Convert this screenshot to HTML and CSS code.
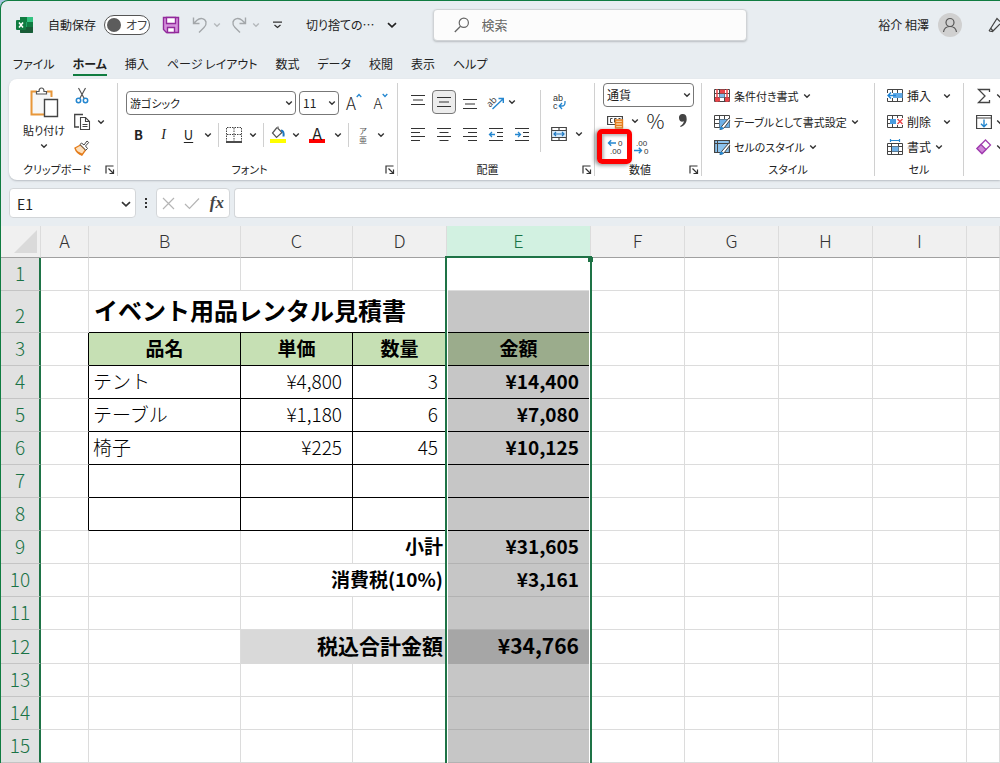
FILE: index.html
```
<!DOCTYPE html>
<html lang="ja">
<head>
<meta charset="utf-8">
<title>切り捨ての - Excel</title>
<link rel="stylesheet" href="styles.css">
</head>
<body>
<svg class="defs" aria-hidden="true">
  <symbol id="chev" viewBox="0 0 8 8"><path d="M1.2 2.6 4 5.3 6.8 2.6" fill="none" stroke="currentColor" stroke-width="1.4"/></symbol>
  <symbol id="launch" viewBox="0 0 10 10"><path d="M1 8.5V1h7.5M3.5 3.5l4.5 4.500M8.500 4.500v4h-4" fill="none" stroke="#333" stroke-width="1.2"/></symbol>
  <symbol id="table" viewBox="0 0 16 16"><path d="M.5 1.500h15v12H.5zM.5 5.500h15M.5 9.500h15M5.500 1.500v12M10.500 1.500v12" fill="#fff" stroke="#444"/></symbol>
</svg>
<div class="window">
  <header class="titlebar">
    <svg class="logo" width="18" height="18" viewBox="0 0 18 18"><rect x="4" y="1" width="13" height="16" rx="1" fill="#21a366"/><path d="M4 1h7v5H4z" fill="#107c41"/><path d="M11 1h5a1 1 0 0 1 1 1v4h-6z" fill="#33c481"/><path d="M4 11h13v5a1 1 0 0 1-1 1H5a1 1 0 0 1-1-1z" fill="#185c37"/><path d="M11 11h6v-5h-6z" fill="#107c41"/><rect x="0" y="4" width="10" height="10" rx="1" fill="#107c41"/><path d="m3 6.500 4 5M7 6.500l-4 5" stroke="#fff" stroke-width="1.500"/></svg>
    <label class="autosave"><span>自動保存</span><input type="checkbox"><span class="track"><span class="knob"></span>オフ</span></label>
    <button class="save" aria-label="保存"><svg width="18" height="18" viewBox="0 0 18 18"><path d="M1.500 1.500h15v15h-12l-3-3z" fill="#d591dc" stroke="#922a9c" stroke-width="1.400"/><path d="M4.500 1.500h9v6h-9zM5.500 11.500h7v5h-7z" fill="#fff" stroke="#922a9c" stroke-width="1.400"/></svg></button>
    <button class="undo" aria-label="元に戻す"><svg width="16" height="18" viewBox="0 0 16 18"><path d="M1.500 1.500v6h6M1.500 7.500 5 4.200C8 1.500 13 2 14 6c.5 2.500-.5 4-2 5.500l-5 5" fill="none" stroke="#a3a7aa" stroke-width="1.400"/></svg><svg class="chev pale"><use href="#chev"/></svg></button>
    <button class="undo" aria-label="やり直し"><svg width="16" height="18" viewBox="0 0 16 18"><path d="M14.500 1.500v6h-6M14.500 7.500 11 4.200C8 1.500 3 2 2 6c-.5 2.500.5 4 2 5.500l5 5" fill="none" stroke="#a3a7aa" stroke-width="1.400"/></svg><svg class="chev pale"><use href="#chev"/></svg></button>
    <button class="custom" aria-label="クイックアクセスのカスタマイズ"><svg width="9" height="8" viewBox="0 0 9 8"><path d="M0 1.200h9M1.500 4l3 2.500 3-2.500" fill="none" stroke="#333" stroke-width="1.300"/></svg></button>
    <button class="docname"><span>切り捨ての…</span><svg width="10" height="10" viewBox="0 0 8 8"><path d="M.8 2.500 4 5.500 7.200 2.500" fill="none" stroke="#222" stroke-width="1.300"/></svg></button>
    <label class="search"><svg width="16" height="16" viewBox="0 0 16 16"><circle cx="9.800" cy="5.800" r="4.600" fill="none" stroke="#666" stroke-width="1.200"/><path d="M6.500 9.200.8 15" stroke="#666" stroke-width="1.300"/></svg><input type="text" placeholder="検索" aria-label="検索"></label>
    <button class="user"><span>裕介 相澤</span><svg width="24" height="24" viewBox="0 0 24 24"><circle cx="12" cy="12" r="12" fill="#d0d0d0"/><circle cx="12" cy="9.500" r="4" fill="none" stroke="#555" stroke-width="1.200"/><path d="M5.500 19c.5-3.500 3-5.500 6.500-5.500s6 2 6.500 5.500" fill="none" stroke="#555" stroke-width="1.200"/></svg></button>
    <button class="pen" aria-label="ペン"><svg width="12" height="16" viewBox="0 0 12 16"><path d="M1 14 9 1.500l3 3M1 14l3.500.5L12 7M2.500 11l2.500 3" fill="none" stroke="#444" stroke-width="1.200"/></svg></button>
  </header>

  <nav class="tabs">
    <button>ファイル</button><button class="active">ホーム</button><button>挿入</button><button>ページ レイアウト</button><button>数式</button><button>データ</button><button>校閲</button><button>表示</button><button>ヘルプ</button>
  </nav>

  <section class="ribbon">
    <div class="group clipboard">
      <div class="body">
        <button class="paste"><svg width="30" height="31" viewBox="0 0 30 31"><path d="M8 4.500H2.500v23H15M18 4.500h4.500V10" fill="#f8f3ea" stroke="#e8973a" stroke-width="2"/><path d="M4 6h17v20H4z" fill="#f7f7f7"/><path d="M7.500 7V4.500H10C10 2 11 1 12.500 1S15 2 15 4.500h2.500V7z" fill="#fff" stroke="#555" stroke-width="1.200"/><path d="M15.500 12.500h13v17h-13z" fill="#fff" stroke="#444" stroke-width="1.400"/></svg><span>貼り付け</span><svg class="chev"><use href="#chev"/></svg></button>
        <div class="stack">
          <button aria-label="切り取り"><svg width="16" height="18" viewBox="0 0 16 18"><path d="m4.500 1 6 11M11.500 1l-6 11" stroke="#555" stroke-width="1.200"/><circle cx="4.500" cy="13.500" r="2.200" fill="none" stroke="#2587d0" stroke-width="1.500"/><circle cx="11.500" cy="13.500" r="2.200" fill="none" stroke="#2587d0" stroke-width="1.500"/></svg></button>
          <button aria-label="コピー"><svg width="16" height="18" viewBox="0 0 16 18"><path d="M5 14H.7V1.500H9" fill="none" stroke="#444" stroke-width="1.300"/><path d="M6.500 4.500h5l4 4v8h-9zM11.500 4.500v4h4M8.500 11.500h5M8.500 13.500h5" fill="#fff" stroke="#444" stroke-width="1.100"/></svg><svg class="chev"><use href="#chev"/></svg></button>
          <button aria-label="書式のコピー"><svg width="16" height="16" viewBox="0 0 16 16"><path d="m1 8 5.500-3 5 5L8 15C5 14 2 11.500 1 8z" fill="#fce0bd" stroke="#e57d1c" stroke-width="1.400"/><path d="M3 11l6 3-1 1.500C6 15 4 13.500 3 11z" fill="#e57d1c"/><path d="m6 4.500 1.500-1.500 2.500 2 3-4 1.700 1.500L11.500 6l2 2.500-1.700 1.700z" fill="#fff" stroke="#444"/></svg></button>
        </div>
      </div>
      <div class="caption"><span>クリップボード</span><button aria-label="クリップボードの詳細"><svg width="10" height="10"><use href="#launch"/></svg></button></div>
    </div>

    <div class="group font">
      <div class="body rows">
        <div class="row">
          <span class="select fontname"><select aria-label="フォント"><option>游ゴシック</option></select><svg class="chev"><use href="#chev"/></svg></span>
          <span class="select fontsize"><select aria-label="フォント サイズ"><option>11</option></select><svg class="chev"><use href="#chev"/></svg></span>
          <button class="grow" aria-label="フォント サイズの拡大">A<svg width="6" height="5" viewBox="0 0 6 5"><path d="m.7 4 2.300-2.500L5.300 4" fill="none" stroke="#2587d0" stroke-width="1.300"/></svg></button>
          <button class="grow small" aria-label="フォント サイズの縮小">A<svg width="6" height="5" viewBox="0 0 6 5"><path d="M.7 1 3 3.500 5.300 1" fill="none" stroke="#2587d0" stroke-width="1.300"/></svg></button>
        </div>
        <div class="row tight">
          <button class="w25 bold">B</button><button class="w25 ital">I</button><button class="w25 under">U</button><button class="w14" aria-label="下線の種類"><svg class="chev"><use href="#chev"/></svg></button>
          <i class="sep"></i>
          <button class="w24" aria-label="罫線"><svg width="16" height="16" viewBox="0 0 16 16"><path d="M.5 1v13M15.500 1v13M8 1v13M1 .5h14M1 7.500h14" stroke="#444" stroke-dasharray="1.500 1"/><path d="M0 15h16" stroke="#111" stroke-width="1.600"/></svg></button><button class="w14" aria-label="罫線の種類"><svg class="chev"><use href="#chev"/></svg></button>
          <i class="sep"></i>
          <button class="w22" aria-label="塗りつぶしの色"><svg width="16" height="17" viewBox="0 0 16 17"><path d="M7 1.500 2.500 7l4 4.500L12 6.500 8 2.500v-2" fill="#fff" stroke="#555" stroke-width="1.200"/><path d="M11 4.500c2 0 3 1.500 2.500 6" fill="none" stroke="#1f78c0" stroke-width="2"/><path d="M0 13h16v4H0z" fill="#ff0"/></svg></button><button class="w14" aria-label="塗りつぶしの色を選択"><svg class="chev"><use href="#chev"/></svg></button>
          <button class="fontcolor" aria-label="フォントの色">A</button><button class="w14" aria-label="フォントの色を選択"><svg class="chev"><use href="#chev"/></svg></button>
          <i class="sep"></i>
          <button class="w22 ruby" aria-label="ふりがな"><span>ア</span><span>亜</span></button><button class="w14" aria-label="ふりがなの設定"><svg class="chev"><use href="#chev"/></svg></button>
        </div>
      </div>
      <div class="caption"><span>フォント</span><button aria-label="フォントの詳細"><svg width="10" height="10"><use href="#launch"/></svg></button></div>
    </div>

    <div class="group align">
      <div class="body">
        <div class="alignleft">
          <button aria-label="上揃え"><svg width="16" height="16" viewBox="0 0 16 16"><path d="M1 1.500h14M3 6h10M1 10.500h14" stroke="#333" stroke-width="1.200"/></svg></button>
          <button class="pressed" aria-label="上下中央揃え"><svg width="16" height="16" viewBox="0 0 16 16"><path d="M1 3.500h14M3 8h10M1 12.500h14" stroke="#333" stroke-width="1.200"/></svg></button>
          <button aria-label="下揃え"><svg width="16" height="16" viewBox="0 0 16 16"><path d="M1 5.500h14M3 10h10M1 14.500h14" stroke="#333" stroke-width="1.200"/></svg></button>
          <button class="wide" aria-label="方向"><svg width="16" height="16" viewBox="0 0 16 16"><text x="-3" y="10" transform="rotate(-45 4 6)" class="ab">ab</text><path d="M4.500 15 15 5M10.500 4.500H15.300V9" fill="none" stroke="#2587d0" stroke-width="1.400"/></svg><svg class="chev"><use href="#chev"/></svg></button>
          <button aria-label="左揃え"><svg width="16" height="16" viewBox="0 0 16 16"><path d="M1 2.500h14M1 6.500h9M1 10.500h14M1 14.500h9" stroke="#333" stroke-width="1.200"/></svg></button>
          <button aria-label="中央揃え"><svg width="16" height="16" viewBox="0 0 16 16"><path d="M1 2.500h14M3.500 6.500h9M1 10.500h14M3.500 14.500h9" stroke="#333" stroke-width="1.200"/></svg></button>
          <button aria-label="右揃え"><svg width="16" height="16" viewBox="0 0 16 16"><path d="M1 2.500h14M6 6.500h9M1 10.500h14M6 14.500h9" stroke="#333" stroke-width="1.200"/></svg></button>
          <button aria-label="インデントを減らす"><svg width="16" height="16" viewBox="0 0 16 16"><path d="M1 2.500h14M9 6.500h6M9 10.500h6M1 14.500h14" stroke="#333" stroke-width="1.200"/><path d="M1.500 8.500H7M4 6 1.500 8.500 4 11" fill="none" stroke="#2587d0" stroke-width="1.300"/></svg></button>
          <button aria-label="インデントを増やす"><svg width="16" height="16" viewBox="0 0 16 16"><path d="M1 2.500h14M9 6.500h6M9 10.500h6M1 14.500h14" stroke="#333" stroke-width="1.200"/><path d="M1 8.500h5.500M4 6l2.500 2.500L4 11" fill="none" stroke="#2587d0" stroke-width="1.300"/></svg></button>
        </div>
        <i class="sep tall"></i>
        <div class="alignright">
          <button class="wrap" aria-label="折り返して全体を表示する"><svg width="16" height="18" viewBox="0 0 16 18"><text x="2" y="8" class="wraptext">ab</text><text x="2" y="16" class="wraptext">c</text><path d="M14 8v1.500c0 2-1 3.500-3 3.500H8.500M11 10l-2.800 3 2.800 3" fill="none" stroke="#2587d0" stroke-width="1.300"/></svg></button>
          <button class="merge" aria-label="セルを結合して中央揃え"><svg width="16" height="16" viewBox="0 0 16 16"><path d="M.7 1.500h14.600v13H.7zM.7 4.500h14.600M.7 11.500h14.600M8 1.500v3M8 11.500v3" fill="#fff" stroke="#444" stroke-width="1.200"/><path d="M1.300 5h13.400v6H1.300z" fill="#d9ebfa"/><path d="M3 8h10M5 6 3 8l2 2M11 6l2 2-2 2" fill="none" stroke="#1f78c0" stroke-width="1.200"/></svg></button><button class="w14" aria-label="結合の種類"><svg class="chev"><use href="#chev"/></svg></button>
        </div>
      </div>
      <div class="caption"><span>配置</span><button aria-label="配置の詳細"><svg width="10" height="10"><use href="#launch"/></svg></button></div>
    </div>

    <div class="group number">
      <div class="body lines">
        <span class="select numfmt"><select aria-label="数値の書式"><option>通貨</option></select><svg class="chev"><use href="#chev"/></svg></span>
        <div class="line">
          <button class="w25" aria-label="通貨表示形式"><svg width="17" height="15" viewBox="0 0 17 15"><path d="M.6 2.500h14.800v8H.6z" fill="#fff" stroke="#444" stroke-width="1.200"/><path d="M5.500 4.500h-2v4h2M9.500 4.500h-2v4M11.500 4.500h2" fill="none" stroke="#444"/><path d="M8.500 6h7v8h-7z" fill="#fbd19b" stroke="#e57d1c" stroke-width="1.400"/><path d="M8.500 8.700h7M8.500 11.400h7" stroke="#e57d1c" stroke-width="1.200"/></svg></button><button class="w14" aria-label="通貨の種類"><svg class="chev"><use href="#chev"/></svg></button><button class="percent">%</button><button class="comma" aria-label="桁区切りスタイル"><svg width="10" height="14" viewBox="0 0 10 14"><path d="M1 4a3.500 3.500 0 0 1 7.500-.5C9.500 8 6.500 12 2.500 13l-.3-1C4.500 11 5.800 9 5.800 7.300 3.500 8.500 1 7 1 4z" fill="#444"/></svg></button>
        </div>
        <div class="line">
          <button class="decimal target" aria-label="小数点以下の表示桁数を増やす"><svg width="18" height="16" viewBox="0 0 18 16"><text x="11" y="7" class="dec">0</text><text x="3" y="15" class="dec">.00</text><path d="M1.500 4H9M4.200 1.300 1.500 4l2.700 2.700" fill="none" stroke="#2587d0" stroke-width="1.400"/></svg></button>
          <button class="decimal" aria-label="小数点以下の表示桁数を減らす"><svg width="18" height="16" viewBox="0 0 18 16"><text x="3" y="7" class="dec">.00</text><text x="11" y="15" class="dec">0</text><path d="M1 11.500h7.500M5.800 8.800l2.700 2.700-2.700 2.700" fill="none" stroke="#2587d0" stroke-width="1.400"/></svg></button>
        </div>
      </div>
      <div class="caption"><span>数値</span><button aria-label="数値の詳細"><svg width="10" height="10"><use href="#launch"/></svg></button></div>
    </div>

    <div class="group styles">
      <div class="body lines">
        <button class="item"><svg width="16" height="16" viewBox="0 0 16 16"><use href="#table" width="16" height="16"/><path d="M6 1.500h5v4H6zM1 9.500h5v4H1zM11 9.500h4.500v4H11z" fill="#e8444a"/><path d="M5.500 6h5v3.500h-5z" fill="#7fb9ea"/><path d="M3 1v13M13 1v13" stroke="#e8444a" stroke-width="1.500"/></svg>条件付き書式<svg class="chev"><use href="#chev"/></svg></button>
        <button class="item"><svg width="16" height="16" viewBox="0 0 16 16"><use href="#table" width="16" height="16"/><path d="M5.500 5.500h10v8h-10z" fill="#6fb1e8"/><path d="m15 4-7 8-2 3.500 4-1.500 6-8" fill="#fff" stroke="#444"/><path d="M5.500 15.500c0-3 2-3.500 3.500-2s-.5 2.500-3.500 2z" fill="#2587d0"/></svg>テーブルとして書式設定<svg class="chev"><use href="#chev"/></svg></button>
        <button class="item"><svg width="16" height="16" viewBox="0 0 16 16"><path d="M.6 1.500h14.800v12H.6z" fill="#8cc3ee" stroke="#444" stroke-width="1.200"/><path d="M.6 4.500h14.800M3.500 1.500v12" stroke="#444"/><path d="m15 4-7 8-2 3.500 4-1.500 6-8" fill="#fff" stroke="#444"/><path d="M5.500 15.500c0-3 2-3.500 3.500-2s-.5 2.500-3.500 2z" fill="#2587d0"/></svg>セルのスタイル<svg class="chev"><use href="#chev"/></svg></button>
      </div>
      <div class="caption"><span>スタイル</span></div>
    </div>

    <div class="group cells">
      <div class="body lines">
        <button class="item spread"><svg width="16" height="16" viewBox="0 0 16 16"><use href="#table" width="16" height="16"/><path d="M6 5h9.500v5H6z" fill="#5fa9e6"/><path d="M0 5h6v5H0z" fill="#fff"/><path d="M1 7.500h8M4 4.500l-3 3 3 3" fill="none" stroke="#1f83d3" stroke-width="1.400"/></svg>挿入<svg class="chev"><use href="#chev"/></svg></button>
        <button class="item spread"><svg width="16" height="16" viewBox="0 0 16 16"><use href="#table" width="16" height="16"/><path d="M3 5h6v5H3z" fill="#4a9de0"/><path d="M9 4h7v7H9z" fill="#fff"/><path d="m10.500 5 5 5M15.500 5l-5 5" stroke="#e8444a" stroke-width="1.400"/></svg>削除<svg class="chev"><use href="#chev"/></svg></button>
        <button class="item"><svg width="16" height="16" viewBox="0 0 16 16"><path d="M.5 4.500h15v11H.5zM.5 7.500h15M.5 12.500h15M4.500 4.500v11M11.500 4.500v11" fill="#fff" stroke="#444"/><path d="M5 7.500h6.500v5H5z" fill="#6fb1e8"/><path d="M3.500 1.500h9M3.500 0v3M12.500 0v3" stroke="#2587d0" stroke-width="1.200"/></svg>書式<svg class="chev"><use href="#chev"/></svg></button>
      </div>
      <div class="caption"><span>セル</span></div>
    </div>

    <div class="group editing">
      <div class="body lines">
        <button class="item" aria-label="合計"><svg width="16" height="16" viewBox="0 0 16 16"><path d="M13.500 4V1.500h-11L9 8l-6.500 6.500h11V12" fill="none" stroke="#444" stroke-width="1.300"/></svg><svg class="chev"><use href="#chev"/></svg></button>
        <button class="item" aria-label="フィル"><svg width="16" height="16" viewBox="0 0 16 16"><path d="M.6 1.500h14.800v13H.6zM.6 4h14.800" fill="#fff" stroke="#444" stroke-width="1.200"/><path d="M8 5.500v7M5 9.700l3 3 3-3" fill="none" stroke="#2587d0" stroke-width="1.400"/></svg><svg class="chev"><use href="#chev"/></svg></button>
        <button class="item" aria-label="クリア"><svg width="16" height="16" viewBox="0 0 16 16"><path d="M1 9.500 9.500 1l5 5L6 14.500z" fill="#fff" stroke="#a23fb0" stroke-width="1.300"/><path d="M1 9.500 5 5.500l5 5-4 4z" fill="#cf85d8" stroke="#a23fb0" stroke-width="1.300"/></svg><svg class="chev"><use href="#chev"/></svg></button>
      </div>
    </div>
  </section>

  <div class="formulabar">
    <div class="namebox"><input type="text" value="E1" aria-label="名前ボックス"><button aria-label="名前の一覧"><svg width="10" height="10" viewBox="0 0 8 8"><path d="M.8 2.500 4 5.500 7.200 2.500" fill="none" stroke="#333" stroke-width="1.300"/></svg></button></div>
    <svg class="dots" width="4" height="12" viewBox="0 0 4 12"><path d="M1 1h2v2H1zM1 5h2v2H1zM1 9h2v2H1z" fill="#333"/></svg>
    <div class="fxbox">
      <button aria-label="キャンセル"><svg width="13" height="13" viewBox="0 0 13 13"><path d="m1 1 11 11M12 1 1 12" stroke="#b5b5b5" stroke-width="1.200"/></svg></button>
      <button aria-label="入力"><svg width="16" height="13" viewBox="0 0 16 13"><path d="m1 7 4.500 4.500L15 1.500" fill="none" stroke="#b5b5b5" stroke-width="1.200"/></svg></button>
      <button class="fx">fx</button>
    </div>
    <input class="formula" type="text" aria-label="数式">
  </div>

  <main class="sheet">
    <table>
      <colgroup><col class="c-row"><col class="c-a"><col class="c-b"><col class="c-c"><col class="c-d"><col class="c-e"><col class="c-n"><col class="c-n"><col class="c-n"><col class="c-n"><col></colgroup>
      <thead>
        <tr><th class="corner"><svg width="23" height="23" viewBox="0 0 23 23"><path d="M23 0v23H0z" fill="#dadada"/></svg></th><th>A</th><th>B</th><th>C</th><th>D</th><th class="sel">E<div class="selection"><i></i></div></th><th>F</th><th>G</th><th>H</th><th>I</th><th></th></tr>
      </thead>
      <tbody>
        <tr><th>1</th><td></td><td></td><td></td><td></td><td></td><td></td><td></td><td></td><td></td><td></td></tr>
        <tr class="r-title"><th>2</th><td></td><td colspan="3" class="title kb">イベント用品レンタル見積書</td><td class="e kb"></td><td></td><td></td><td></td><td></td><td></td></tr>
        <tr class="r-head"><th>3</th><td class="kr"></td><td class="k">品名</td><td class="k">単価</td><td class="k">数量</td><td class="e kb">金額</td><td></td><td></td><td></td><td></td><td></td></tr>
        <tr><th>4</th><td class="kr"></td><td class="k">テント</td><td class="k num">¥4,800</td><td class="k cnt">3</td><td class="e kb">¥14,400</td><td></td><td></td><td></td><td></td><td></td></tr>
        <tr><th>5</th><td class="kr"></td><td class="k">テーブル</td><td class="k num">¥1,180</td><td class="k cnt">6</td><td class="e kb">¥7,080</td><td></td><td></td><td></td><td></td><td></td></tr>
        <tr><th>6</th><td class="kr"></td><td class="k">椅子</td><td class="k num">¥225</td><td class="k cnt">45</td><td class="e kb">¥10,125</td><td></td><td></td><td></td><td></td><td></td></tr>
        <tr><th>7</th><td class="kr"></td><td class="k"></td><td class="k"></td><td class="k"></td><td class="e kb"></td><td></td><td></td><td></td><td></td><td></td></tr>
        <tr><th>8</th><td class="kr"></td><td class="k"></td><td class="k"></td><td class="k"></td><td class="e kb"></td><td></td><td></td><td></td><td></td><td></td></tr>
        <tr><th>9</th><td></td><td></td><td></td><td class="lab">小計</td><td class="e">¥31,605</td><td></td><td></td><td></td><td></td><td></td></tr>
        <tr><th>10</th><td></td><td></td><td colspan="2" class="lab">消費税(10%)</td><td class="e">¥3,161</td><td></td><td></td><td></td><td></td><td></td></tr>
        <tr><th>11</th><td></td><td></td><td></td><td></td><td class="e"></td><td></td><td></td><td></td><td></td><td></td></tr>
        <tr class="r-total"><th>12</th><td></td><td></td><td colspan="2" class="lab">税込合計金額</td><td class="e">¥34,766</td><td></td><td></td><td></td><td></td><td></td></tr>
        <tr><th>13</th><td></td><td></td><td></td><td></td><td class="e"></td><td></td><td></td><td></td><td></td><td></td></tr>
        <tr><th>14</th><td></td><td></td><td></td><td></td><td class="e"></td><td></td><td></td><td></td><td></td><td></td></tr>
        <tr><th>15</th><td></td><td></td><td></td><td></td><td class="e"></td><td></td><td></td><td></td><td></td><td></td></tr>
      </tbody>
    </table>
  </main>
</div>
</body>
</html>
```
FILE: styles.css
```
* { box-sizing: border-box; }
body { margin: 0; background: #a9c3e0; font: 12px/16px "Noto Sans CJK JP", sans-serif; color: #222; overflow: hidden; }
svg { flex: none; display: block; overflow: visible; }
button, input, select { font: inherit; color: inherit; border: 0; padding: 0; margin: 0; background: none; }
button { display: flex; align-items: center; justify-content: center; white-space: nowrap; font-feature-settings: "palt"; }
input { min-width: 0; outline: 0; }
.defs { position: absolute; width: 0; height: 0; }
.chev { width: 8px; height: 8px; color: #333; }
.pale { color: #b4b8bb; }
.window { height: 100vh; display: flex; flex-direction: column; overflow: hidden; border: solid #107c41; border-width: 1px 0 0 1px; border-top-left-radius: 8px; background: #e8edf1; }

.titlebar { flex: none; height: 47px; display: flex; align-items: center; padding-left: 15px; }
.autosave { display: flex; align-items: center; gap: 8px; margin-left: 14px; position: relative; }
.autosave input { position: absolute; opacity: 0; }
.track { display: flex; align-items: center; gap: 5px; width: 46px; height: 20px; border: 1px solid #555; border-radius: 10px; background: #fff; padding-left: 2px; color: #444; white-space: nowrap; font-feature-settings: "palt"; }
.knob { flex: none; width: 14px; height: 14px; border-radius: 50%; background: #5c5c5c; }
.save { margin-left: 12px; }
.undo { margin-left: 12px; gap: 5px; }
.undo + .undo { margin-left: 10px; }
.custom { margin-left: 13px; }
.docname { margin-left: 24px; gap: 12px; }
.search { width: 314px; height: 32px; display: flex; align-items: center; gap: 12px; padding-left: 20px; margin-left: 36px; background: #fcfcfc; border: 1px solid #d0d3d6; border-radius: 4px; box-shadow: 0 1px 2px #b9bdc1; font-size: 13px; }
.search input { flex: 1; }
.search input::placeholder { color: #666; opacity: 1; }
.user { margin-left: auto; gap: 9px; }
.pen { margin-left: 26px; }

.tabs { flex: none; height: 31px; display: flex; gap: 18px; padding-left: 12px; }
.tabs button { height: 28px; padding-top: 6px; border-bottom: 2px solid transparent; }
.tabs .active { font-weight: 700; border-color: #107c41; }

.ribbon { flex: none; display: flex; margin-left: 8px; background: #fff; border-radius: 8px 0 0 8px; padding: 4px 0; box-shadow: 0 1px 2px #b8bdc2; }
.group { flex: none; display: flex; flex-direction: column; height: 93px; position: relative; border-right: 1px solid #d0d0d0; }
.body { height: 77px; display: flex; }
.caption { height: 16px; display: flex; justify-content: center; padding: 1px 24px 0 0; font-size: 11px; font-feature-settings: "palt"; position: relative; }
.caption button { position: absolute; right: 2px; top: 5px; }
.clipboard { width: 109px; }
.clipboard .body { padding-left: 13px; }
.clipboard .caption { padding-right: 12px; }
.paste { width: 44px; flex-direction: column; justify-content: flex-start; gap: 4px; padding-top: 4px; font-size: 11px; }
.stack { display: flex; flex-direction: column; gap: 8px; padding: 4px 0 0 8px; }
.stack button { justify-content: flex-start; gap: 7px; height: 18px; }
.font { width: 280px; padding-left: 8px; }
.rows { flex-direction: column; padding-top: 7px; gap: 7px; }
.row { height: 25px; display: flex; align-items: center; gap: 3px; }
.tight { gap: 0; }
.select { position: relative; display: flex; height: 24px; border: 1px solid #777; border-radius: 4px; background: #fff; }
.select select { appearance: none; width: 100%; padding-left: 3px; outline: 0; font-feature-settings: "palt"; }
.select .chev { position: absolute; right: 2px; top: 7px; pointer-events: none; }
.fontname { width: 170px; }
.fontname select { font-size: 11px; }
.fontsize { width: 40px; }
.grow { width: 24px; align-items: flex-start; font: 300 17px/20px "Noto Sans CJK JP", sans-serif; }
.small { font-size: 15px; }
.w14 { width: 14px; height: 24px; }
.w22 { width: 22px; height: 24px; }
.w24 { width: 24px; height: 24px; }
.w25 { width: 25px; height: 24px; }
.bold { font-weight: 700; font-size: 13px; }
.ital { font: italic 14px "Liberation Serif", serif; }
.under { text-decoration: underline; text-underline-offset: 2px; font-size: 13px; }
.sep { flex: none; width: 1px; height: 24px; margin: 0 3px; background: #d0d0d0; }
.fontcolor { font-size: 16px; line-height: 14px; height: 17px; width: 16px; margin: 0 6px; border-bottom: 4px solid #f00; }
.ruby { flex-direction: column; font-size: 8px; line-height: 9px; color: #555; }
.align { width: 197px; padding-left: 7px; }
.alignleft { width: 130px; display: grid; grid-template-columns: repeat(5, 26px); grid-template-rows: 24px 24px; row-gap: 8px; padding-top: 7px; }
.alignleft .wide { grid-column: span 2; justify-content: flex-start; gap: 4px; padding-left: 5px; }
.alignleft .pressed { border: 1px solid #777; border-radius: 4px; background: #ececec; width: 24px; justify-self: center; }
.ab { font: 9px "Noto Sans", sans-serif; fill: #444; }
.wraptext { font: 9px "Liberation Sans", sans-serif; fill: #333; }
.tall { height: 62px; margin: 7px 5px 0; }
.alignright { display: grid; grid-template-columns: 26px 14px; grid-template-rows: 24px 24px; row-gap: 8px; padding-top: 7px; }
.wrap { grid-column: 1; }
.merge { grid-row: 2; }
.alignright .w14 { grid-row: 2; }
.number { width: 107px; padding-left: 8px; }
.lines { flex-direction: column; align-items: flex-start; }
.line { display: flex; height: 26px; align-items: center; }
.numfmt { width: 91px; margin-bottom: 1px; }
.percent { width: 27px; font: 300 20px/20px "Noto Sans CJK JP", sans-serif; }
.comma { width: 28px; }
.decimal { width: 26px; height: 24px; position: relative; }
.dec { font: 8px "Liberation Sans", sans-serif; fill: #333; }
.target::after { content: ""; position: absolute; inset: -6px -3px -5px -6px; border: 5px solid #f00; border-radius: 5px; box-shadow: -2px 1px 4px #888, inset 2px 2px 3px #bbb; z-index: 1; }
.styles { width: 173px; padding-left: 12px; }
.styles .item { font-size: 11px; }
.cells { width: 89px; padding-left: 12px; }
.styles .caption, .cells .caption { padding-right: 12px; }
.editing { padding-left: 12px; border-right: 0; }
.item { height: 26px; gap: 4px; }
.spread .chev { margin-left: 8px; }

.formulabar { flex: none; display: flex; align-items: center; height: 30px; margin: 8px 0 8px 8px; }
.namebox, .fxbox, .formula { height: 30px; background: #fff; border: 1px solid #d3d6d9; border-radius: 4px; display: flex; align-items: center; }
.namebox { width: 127px; padding: 2px 4px 0 7px; font: 14px "Noto Sans CJK JP", sans-serif; }
.namebox input { flex: 1; }
.dots { margin: 0 8px; }
.fxbox { width: 74px; padding: 0 5px; justify-content: space-between; }
.fx { font: italic 700 17px "Liberation Serif", serif; color: #444; }
.formula { flex: 1; margin-left: 4px; border-right: 0; border-radius: 4px 0 0 4px; }

.sheet { flex: 1; min-height: 0; overflow: hidden; background: #fff; }
table { width: 100%; table-layout: fixed; border-spacing: 0; font: 300 19px/24px "Noto Sans CJK JP", sans-serif; color: #000; }
.c-row { width: 40px; }
.c-a { width: 48px; }
.c-b { width: 152px; }
.c-c { width: 112px; }
.c-d { width: 94px; }
.c-e { width: 144px; }
.c-n { width: 94px; }
th, td { height: 33px; padding: 0 0 3px; border: solid #dcdcdc; border-width: 0 1px 1px 0; white-space: nowrap; }
thead th { height: 32px; font-weight: 300; font-size: 18px; color: #333; background: #f0f0f0; border-bottom-color: #a0a0a0; }
.corner { padding: 0; }
.corner svg { margin-left: 13px; }
thead .sel { position: relative; background: #d2f1e1; color: #1a7346; }
.selection { position: absolute; z-index: 1; left: -2px; right: -2px; top: 30px; height: 100vh; border: 2px solid #1e7346; box-shadow: inset 0 0 0 1px #fff; }
.selection i { position: absolute; right: -3px; top: -1px; width: 5px; height: 5px; background: #1e7346; }
tbody th { font-weight: 300; vertical-align: bottom; padding-bottom: 5px; color: #1a7346; background: #e1e1e1; border-right: 2px solid #1e7346; border-bottom-color: #c4c4c4; }
.r-title td { height: 42px; }
.k, td.kb { border-bottom-color: #000; }
.k, td.kr { border-right-color: #000; }
td.k { padding-left: 4px; }
td.num, td.cnt { text-align: right; padding-right: 10px; }
td.cnt { padding-right: 8px; border-right-color: transparent; }
td.title { font-size: 24px; font-weight: 700; padding-left: 5px; }
.e { background: #c6c6c6; border-bottom-color: #b2b2b2; font-weight: 700; text-align: right; padding-right: 11px; }
.r-head td.k { text-align: center; font-weight: 700; background: #c6e0b4; padding-left: 0; }
.r-head .e { text-align: center; padding-right: 0; background: #9bac8c; }
.lab { text-align: right; font-weight: 700; padding-right: 3px; }
.r-total td { height: 34px; }
.r-total .lab { background: #d9d9d9; border-bottom-color: #d9d9d9; font-size: 21px; }
.r-total .e { background: #a6a6a6; border-bottom-color: #a6a6a6; font-size: 21px; }
```
